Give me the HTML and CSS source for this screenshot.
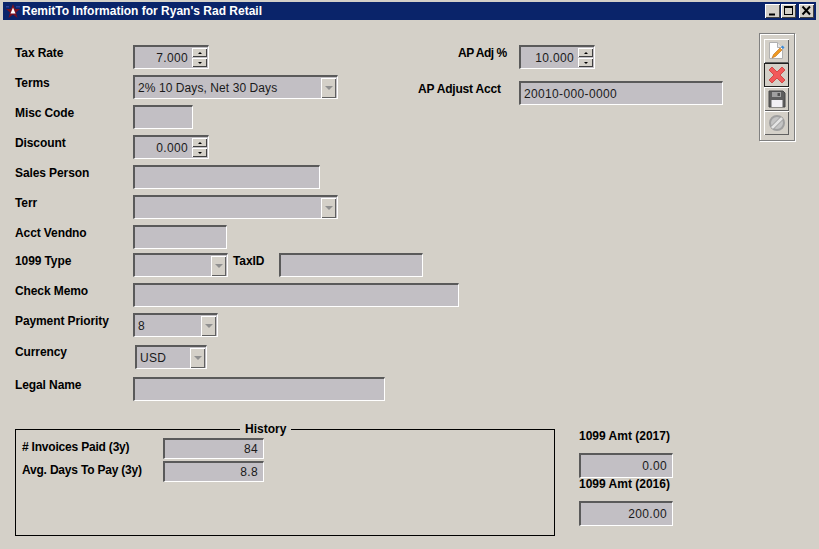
FILE: index.html
```html
<!DOCTYPE html>
<html lang="en">
<head>
    <meta charset="UTF-8">
    <title>RemitTo Information</title>
    <link rel="stylesheet" href="styles.css">
</head>
<body>
    <div class="window">
        <div class="titlebar">
            <svg class="app-icon" width="14" height="14" viewBox="0 0 14 14"><path d="M7 0 9 5h5L10 8.500 11.500 14 7 10.500 2.500 14 4 8.500 0 5h5z" fill="#7a1020"/><path d="M7 3.500 9.500 9.500h-5z" fill="#fff"/><path d="M10 2h4v1.500h-4zM0 2h3v1.500H0z" fill="#2a3f9a"/></svg>
            <span class="title">RemitTo Information for Ryan's Rad Retail</span>
            <div class="title-buttons">
                <div class="tbtn"><svg width="15" height="14" viewBox="0 0 15 14"><path d="M4 9.500h6v2H4z"/></svg></div>
                <div class="tbtn"><svg width="15" height="14" viewBox="0 0 15 14"><path d="M3 2h9v9H3z M4 4v6h7V4z" fill-rule="evenodd"/></svg></div>
                <div class="tbtn tbtn-close"><svg width="15" height="14" viewBox="0 0 15 14"><path d="M3.500 2.500 11 10.500M11 2.500 3.500 10.500" stroke="#000" stroke-width="2" fill="none"/></svg></div>
            </div>
        </div>

        <div class="content">
            <div class="top">
                <div class="form">
                    <div class="row">
                        <span class="label">Tax Rate</span>
                        <div class="field spin w76"><span class="val right">7.000</span><div class="spin-btns"><div class="spin-btn"><i class="up"></i></div><div class="spin-btn"><i class="down"></i></div></div></div>
                    </div>
                    <div class="row">
                        <span class="label">Terms</span>
                        <div class="field combo w205"><span class="val terms">2% 10 Days, Net 30 Days</span><div class="arrow"><i></i></div></div>
                    </div>
                    <div class="row">
                        <span class="label">Misc Code</span>
                        <div class="field w60"></div>
                    </div>
                    <div class="row">
                        <span class="label">Discount</span>
                        <div class="field spin w76"><span class="val right">0.000</span><div class="spin-btns"><div class="spin-btn"><i class="up"></i></div><div class="spin-btn"><i class="down"></i></div></div></div>
                    </div>
                    <div class="row">
                        <span class="label">Sales Person</span>
                        <div class="field w187"></div>
                    </div>
                    <div class="row">
                        <span class="label">Terr</span>
                        <div class="field combo w205"><div class="arrow"><i></i></div></div>
                    </div>
                    <div class="row">
                        <span class="label">Acct Vendno</span>
                        <div class="field w94"></div>
                    </div>
                    <div class="row tight">
                        <span class="label">1099 Type</span>
                        <div class="field combo w95"><div class="arrow"><i></i></div></div>
                        <span class="label-inline">TaxID</span>
                        <div class="field w144"></div>
                    </div>
                    <div class="row">
                        <span class="label">Check Memo</span>
                        <div class="field w326"></div>
                    </div>
                    <div class="row">
                        <span class="label">Payment Priority</span>
                        <div class="field combo w85"><span class="val">8</span><div class="arrow"><i></i></div></div>
                    </div>
                    <div class="row wide">
                        <span class="label raised">Currency</span>
                        <div class="field combo w72 nudge"><span class="val">USD</span><div class="arrow"><i></i></div></div>
                    </div>
                    <div class="row wide">
                        <span class="label">Legal Name</span>
                        <div class="field w252"></div>
                    </div>
                </div>

                <div class="ap">
                    <div class="ap-row">
                        <span class="label-ap pct">AP Adj %</span>
                        <div class="field spin w76"><span class="val right">10.000</span><div class="spin-btns"><div class="spin-btn"><i class="up"></i></div><div class="spin-btn"><i class="down"></i></div></div></div>
                    </div>
                    <div class="ap-row">
                        <span class="label-ap">AP Adjust Acct</span>
                        <div class="field w204"><span class="val">20010-000-0000</span></div>
                    </div>
                </div>

                <div class="toolbar">
                    <div class="tool">
                        <svg width="18" height="18" viewBox="0 0 18 18"><path d="M1.500.500h8l5 5v11h-13z" fill="#fff" stroke="#b0b0b0"/><path d="M9.500.500v5h5" fill="#e6e6e6" stroke="#b0b0b0"/><path d="M4 16l1.500-3.500L12 6l2 2-6.500 6.500z" fill="#f09a20" stroke="#a85a10" stroke-width=".5"/><path d="M13 5l1.500-1.500L16.500 5.500 15 7z" fill="#3a8ad8"/></svg>
                    </div>
                    <div class="tool tool-focus">
                        <svg width="18" height="18" viewBox="0 0 18 18"><path d="M1 4l3-3 5 5 5-5 3 3-5 5 5 5-3 3-5-5-5 5-3-3 5-5z" fill="#f2595a" stroke="#d04a48" stroke-linejoin="round"/></svg>
                    </div>
                    <div class="tool">
                        <svg width="18" height="18" viewBox="0 0 18 18"><path d="M1 1h14l2 2v14H1z" fill="#5e5e5e" stroke="#484848"/><path d="M4 2h9v5H4z" fill="#a0a0a0"/><path d="M9.500 3H12v3H9.500z" fill="#505050"/><path d="M3.500 10h11v7h-11z" fill="#f2f0f4"/></svg>
                    </div>
                    <div class="tool">
                        <svg width="18" height="18" viewBox="0 0 18 18"><circle cx="9" cy="9" r="7" fill="#c4c4c4" stroke="#a0a0a0" stroke-width="2"/><path d="M4 14 14 4" stroke="#e4e4e4" stroke-width="3"/><path d="M5.500 15 15 5.500M3 12.500 12.500 3" stroke="#a0a0a0"/></svg>
                    </div>
                </div>
            </div>

            <div class="bottom">
                <fieldset class="history">
                    <legend>History</legend>
                    <div class="hist-row">
                        <span class="hist-label"># Invoices Paid (3y)</span>
                        <div class="field hist-field"><span class="val right">84</span></div>
                    </div>
                    <div class="hist-row">
                        <span class="hist-label">Avg. Days To Pay (3y)</span>
                        <div class="field hist-field"><span class="val right">8.8</span></div>
                    </div>
                </fieldset>
                <div class="amts">
                    <span class="amt-label">1099 Amt (2017)</span>
                    <div class="field amt-field"><span class="val right">0.00</span></div>
                    <span class="amt-label">1099 Amt (2016)</span>
                    <div class="field amt-field"><span class="val right">200.00</span></div>
                </div>
            </div>
        </div>
    </div>
</body>
</html>
```

FILE: styles.css
```css
html, body {
    margin: 0;
    height: 100%;
    overflow: hidden;
}
body {
    background-color: #d4d0c8;
    font-family: "Liberation Sans", Arial, sans-serif;
    font-size: 12px;
    color: #000;
}
.window {
    padding: 2px 3px 0;
    box-sizing: border-box;
    height: 100%;
}
.titlebar {
    display: flex;
    align-items: center;
    height: 18px;
    background-color: #0a246a;
    color: #fff;
    font-weight: bold;
    padding-left: 3px;
}
.app-icon {
    margin-right: 2px;
}
.title-buttons {
    display: flex;
    margin-left: auto;
    margin-right: 2px;
}
.tbtn {
    width: 15px;
    height: 14px;
    background: #d4d0c8;
    box-shadow: inset 1px 1px 0 #fff, inset -1px -1px 0 #404040;
    margin-left: 1px;
}
.tbtn svg {
    display: block;
}
.tbtn-close {
    margin-left: 3px;
}

.content {
    padding-left: 12px;
}
.top {
    display: flex;
    padding-top: 13px;
}
.form {
    display: flex;
    flex-direction: column;
    gap: 6px;
    margin-top: 12px;
    width: 403px;
    flex-shrink: 0;
    white-space: nowrap;
}
.row {
    display: flex;
    height: 24px;
}
.row.tight {
    margin-top: -2px;
}
.row.wide {
    margin-top: 2px;
}
.label {
    width: 118px;
    flex-shrink: 0;
    padding-top: 1px;
    font-weight: bold;
    line-height: 14px;
    letter-spacing: -0.1px;
}
.label.raised {
    padding-top: 0;
}
.label-inline {
    flex-shrink: 0;
    padding-top: 1px;
    font-weight: bold;
    line-height: 14px;
    margin: 0 8px 0 5px;
    width: 38px;
    letter-spacing: -0.1px;
}
.field {
    display: flex;
    align-items: center;
    box-sizing: border-box;
    height: 24px;
    background-color: #c2bfc4;
    border-style: solid;
    border-width: 2px 1px 1px 2px;
    border-color: #5a5a5a #fff #fff #5a5a5a;
    flex-shrink: 0;
}
.val {
    flex: 1;
    padding: 0 3px;
    letter-spacing: 0.35px;
    color: #1a1a1a;
    line-height: 20px;
}
.val.right {
    text-align: right;
    padding-right: 5px;
}
.spin .val.right {
    padding-right: 4px;
}
.val.terms {
    letter-spacing: 0.08px;
}
.w60 { width: 60px; }
.w72 { width: 72px; }
.w76 { width: 76px; }
.w85 { width: 85px; }
.w94 { width: 94px; }
.w95 { width: 95px; }
.w144 { width: 144px; }
.w187 { width: 187px; }
.w204 { width: 204px; }
.w205 { width: 205px; }
.w252 { width: 252px; }
.w326 { width: 326px; }
.nudge {
    margin-left: 2px;
}

.spin-btns {
    display: flex;
    flex-direction: column;
    gap: 1px;
    width: 15px;
    margin-right: 1px;
}
.spin-btn {
    display: flex;
    align-items: center;
    justify-content: center;
    height: 9px;
    background: #d4d0c8;
    box-shadow: inset 1px 1px 0 #fff, inset -1px -1px 0 #404040;
}
.spin-btn i {
    width: 0;
    height: 0;
    border-left: 2px solid transparent;
    border-right: 2px solid transparent;
}
.spin-btn .up {
    border-bottom: 2px solid #000;
}
.spin-btn .down {
    border-top: 2px solid #000;
}

.arrow {
    display: flex;
    align-items: center;
    justify-content: center;
    width: 15px;
    height: 20px;
    margin-left: auto;
    margin-right: 1px;
    background: #d4d0c8;
    box-shadow: inset 1px 1px 0 #fff, inset -1px -1px 0 #606060;
}
.arrow i {
    width: 0;
    height: 0;
    border-left: 4px solid transparent;
    border-right: 4px solid transparent;
    border-top: 4px solid #909090;
}

.ap {
    display: flex;
    flex-direction: column;
    gap: 12px;
    margin-top: 12px;
    width: 305px;
    flex-shrink: 0;
}
.ap-row {
    display: flex;
    height: 24px;
}
.label-ap {
    width: 101px;
    flex-shrink: 0;
    padding-top: 1px;
    font-weight: bold;
    line-height: 14px;
    white-space: nowrap;
    letter-spacing: -0.2px;
}
.label-ap.pct {
    padding-left: 40px;
    width: 61px;
    letter-spacing: -0.5px;
}
.toolbar {
    display: flex;
    flex-direction: column;
    box-sizing: border-box;
    width: 36px;
    height: 108px;
    margin-left: 36px;
    padding: 5px 5px 0 4px;
    border: 1px solid #808080;
    box-shadow: 1px 1px 0 #fff, inset 1px 1px 0 #fff;
}
.tool {
    display: flex;
    align-items: center;
    justify-content: center;
    flex-shrink: 0;
    height: 24px;
    box-shadow: inset 1px 1px 0 #fff, inset -1px -1px 0 #606060;
}
.tool-focus {
    box-shadow: inset 0 0 0 1px #202020;
}

.bottom {
    display: flex;
    margin-top: 20px;
}
.history {
    box-sizing: border-box;
    width: 540px;
    height: 114px;
    margin: 1px 0 0;
    padding: 2px 0 0 6px;
    border: 1px solid #000;
}
.history legend {
    margin-left: 218px;
    padding: 0 5px;
    font-weight: bold;
    line-height: 14px;
}
.hist-row {
    display: flex;
    height: 21px;
    margin-bottom: 2px;
}
.hist-label {
    width: 141px;
    flex-shrink: 0;
    padding-top: 2px;
    font-weight: bold;
    line-height: 14px;
    white-space: nowrap;
    letter-spacing: -0.2px;
}
.hist-field {
    width: 101px;
    height: 21px;
}
.amts {
    display: flex;
    flex-direction: column;
    margin: 8px 0 0 24px;
}
.amt-label {
    font-weight: bold;
    line-height: 14px;
    margin-bottom: 10px;
    white-space: nowrap;
}
.amt-field {
    width: 94px;
    height: 25px;
    margin-bottom: -1px;
}
```
